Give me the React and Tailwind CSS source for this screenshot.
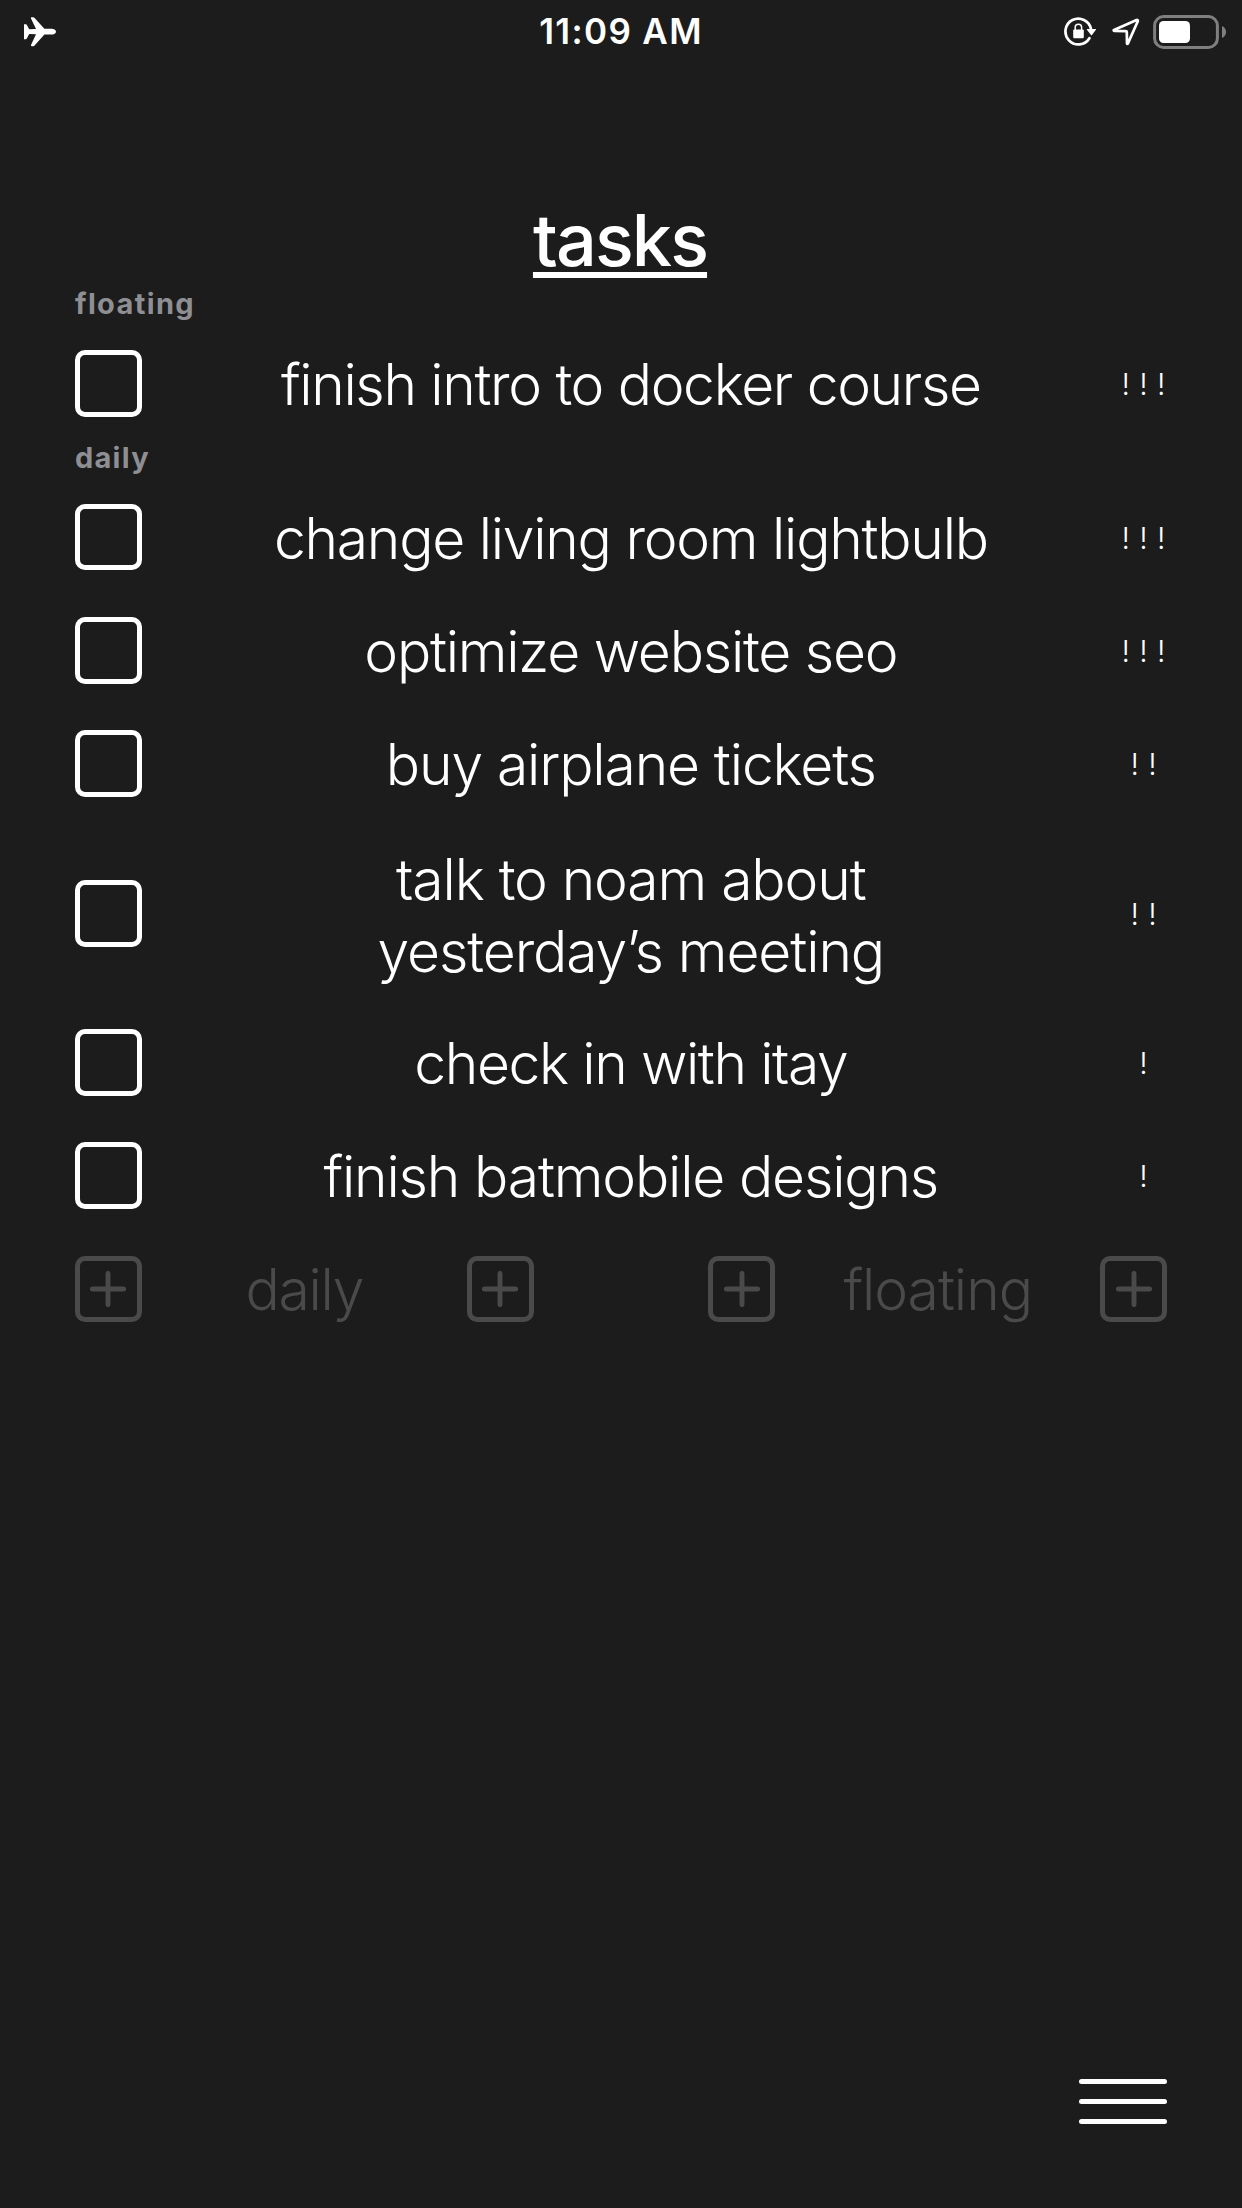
const sections = [
  {
    label: 'floating',
    labelClass: 'tracking-[1.35px]',
    tasks: [{ lines: ['finish intro to docker course'], tracking: 'tracking-[-1.35px]', priority: '!!!' }],
  },
  {
    label: 'daily',
    labelClass: 'tracking-[1.25px]',
    tasks: [
      { lines: ['change living room lightbulb'], tracking: 'tracking-[-1.26px]', priority: '!!!' },
      { lines: ['optimize website seo'], tracking: 'tracking-[-1.25px]', priority: '!!!' },
      { lines: ['buy airplane tickets'], tracking: 'tracking-[-1.14px]', priority: '!!' },
      { lines: ['talk to noam about', 'yesterday’s meeting'], tracking: 'tracking-[-1.1px]', priority: '!!' },
      { lines: ['check in with itay'], tracking: 'tracking-[-1.42px]', priority: '!' },
      { lines: ['finish batmobile designs'], tracking: 'tracking-[-1.18px]', priority: '!' },
    ],
  },
];

function AirplaneIcon() {
  return (
    <svg width="32" height="30" viewBox="0 0 32 30" fill="#fff">
      <path d="M0 7.2H1.8C2.2 7.2 2.5 7.4 2.8 7.8L5.2 12.3L12 12.1L7 1.4C6.7 .7 7.1 .2 7.8 .2H9.2C9.8 .2 10.2 .4 10.6 .9L20.4 11.8H27.5C29.8 11.8 32 13 32 14.7S29.8 17.6 27.5 17.6H20.4L10.6 28.5C10.2 29 9.8 29.2 9.2 29.2H7.8C7.1 29.2 6.7 28.7 7 28L12 17.3L5.2 17.1L2.8 21.6C2.5 22 2.2 22.2 1.8 22.2H0Z" />
    </svg>
  );
}

function RotationLockIcon() {
  return (
    <svg width="32" height="30" viewBox="0 0 32 30" fill="none">
      <path d="M25.4 21.2A12.9 12.9 0 1 1 27 12" stroke="#fff" strokeWidth="2.7" strokeLinecap="round" />
      <path d="M23.2 12H31.6C32 12 32.1 12.3 31.9 12.7L28 18.1C27.7 18.5 27.3 18.5 27 18.1L22.9 12.7C22.7 12.3 22.8 12 23.2 12Z" fill="#fff" />
      <rect x="9.2" y="12.4" width="10.6" height="8.8" rx="1.2" fill="#fff" />
      <path d="M11.2 13V10.2C11.2 6.3 17.6 6.3 17.6 10.2V13" stroke="#fff" strokeWidth="1.5" />
    </svg>
  );
}

function LocationIcon() {
  return (
    <svg width="28" height="28" viewBox="0 0 28 28" fill="none">
      <path d="M2 11.9L24.6 2C25.4 1.7 26.1 2.4 25.8 3.2L15.8 25.6C15.6 26.1 15 26 15 25.5L14.8 14.1C14.8 13.4 14.5 13.1 13.8 13.1L2.2 12.8C1.6 12.8 1.5 12.2 2 11.9Z" stroke="#fff" strokeWidth="2.7" strokeLinejoin="round" />
    </svg>
  );
}

function BatteryIcon() {
  return (
    <svg width="73" height="34" viewBox="0 0 73 34" fill="none">
      <rect x="1.6" y="1.6" width="62.8" height="30.8" rx="9" stroke="#7f7f7f" strokeWidth="3" />
      <rect x="6" y="6" width="31" height="22" rx="4.5" fill="#fff" />
      <path d="M69 11C71.6 12 73 14.4 73 17S71.6 22 69 23Z" fill="#7f7f7f" />
    </svg>
  );
}

function Checkbox() {
  return <button aria-label="complete task" className="size-[66.67px] rounded-[10px] border-5 border-white" />;
}

function AddButton() {
  return (
    <button aria-label="add task" className="grid size-[66.67px] place-items-center rounded-[10px] border-5 border-[#4a4a4a]">
      <svg width="36" height="36" viewBox="0 0 36 36" fill="none">
        <path d="M18 2.4V33.6M2.4 18H33.6" stroke="#4a4a4a" strokeWidth="4.9" strokeLinecap="round" />
      </svg>
    </button>
  );
}

function Task({ lines, tracking, priority }) {
  const spacing = lines.length > 1 ? 'pt-[20.6px] pb-[19px]' : 'py-[19.6px]';
  return (
    <li className={`grid grid-cols-[66.67px_1fr_48px] items-center ${spacing}`}>
      <Checkbox />
      <div className={`-mb-px pt-[3px] pl-px text-center text-[57px] leading-[72px] font-[330] ${tracking}`}>
        {lines.map((line) => (
          <p key={line}>{line}</p>
        ))}
      </div>
      <div className="flex justify-center pt-0.5 pl-px text-[30px] font-light">
        {priority.split('').map((mark, i) => (
          <span key={i} className="w-[17.8px] shrink-0 text-center">{mark}</span>
        ))}
      </div>
    </li>
  );
}

function AddGroup({ label, tracking }) {
  return (
    <div className="flex w-[458.67px] items-center justify-between">
      <AddButton />
      <span className={`pt-0.5 text-[57px] leading-[72px] font-[330] text-[#4a4a4a] ${tracking}`}>{label}</span>
      <AddButton />
    </div>
  );
}

export default function App() {
  return (
    <div className="flex h-[2208px] w-[1242px] flex-col bg-[#1c1c1c] font-['Inter',sans-serif] text-white">
      <header className="grid h-[63px] grid-cols-3 items-center pr-4 pl-6">
        <AirplaneIcon />
        <time className="pr-2 text-center text-[35px] leading-none font-[560] tracking-[1.35px] whitespace-nowrap">11:09 AM</time>
        <div className="flex items-center justify-end">
          <RotationLockIcon />
          <span className="mr-[13px] ml-4"><LocationIcon /></span>
          <BatteryIcon />
        </div>
      </header>

      <main className="flex-1 px-[75px] pt-[134px]">
        <h1 className="h-[89px] pr-0.5 text-center text-[72px] leading-[86px] font-medium tracking-[-1.9px] underline decoration-[6px] underline-offset-[6px] [text-decoration-skip-ink:none]">
          tasks
        </h1>
        {sections.map((section) => (
          <section key={section.label}>
            <h2 className={`h-[40.67px] text-[29px] leading-[35px] font-bold text-[#8e8e93] ${section.labelClass}`}>{section.label}</h2>
            <ul>
              {section.tasks.map((task) => (
                <Task key={task.lines[0]} {...task} />
              ))}
            </ul>
          </section>
        ))}
        <div className="flex justify-between pt-5">
          <AddGroup label="daily" tracking="tracking-[-1.28px]" />
          <AddGroup label="floating" tracking="tracking-[-1.03px]" />
        </div>
      </main>

      <footer className="flex justify-end pr-[75px] pb-[84px]">
        <button aria-label="menu" className="flex w-[88px] flex-col gap-[14.7px]">
          <span className="h-[5.3px] rounded-full bg-white" />
          <span className="h-[5.3px] rounded-full bg-white" />
          <span className="h-[5.3px] rounded-full bg-white" />
        </button>
      </footer>
    </div>
  );
}
